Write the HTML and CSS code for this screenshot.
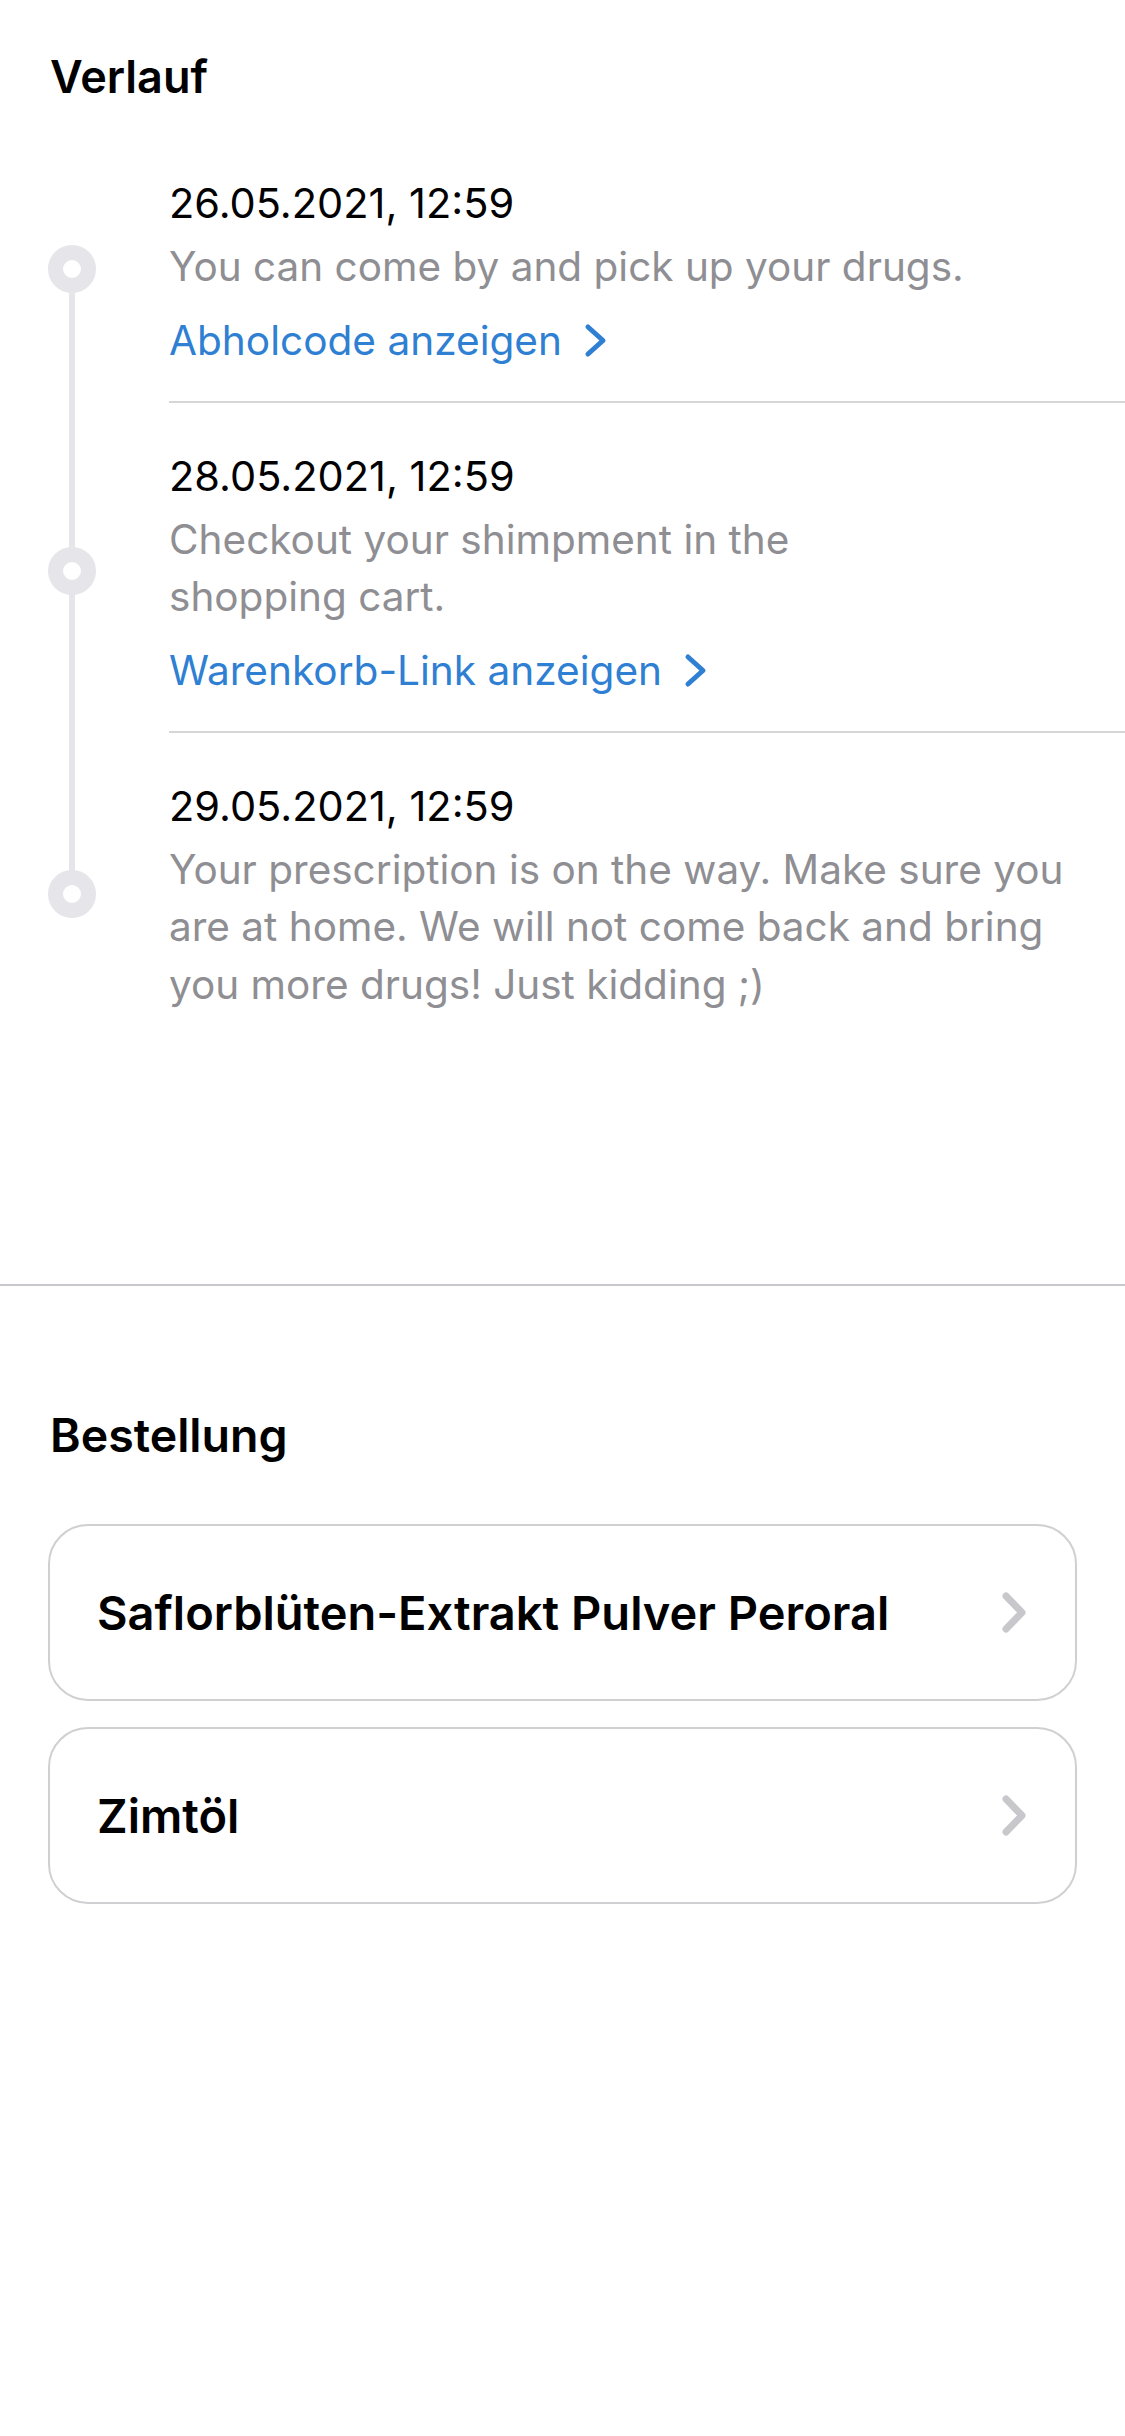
FILE: index.html
```html
<!DOCTYPE html>
<html lang="de">
<head>
<meta charset="utf-8">
<title>Verlauf</title>
<link rel="stylesheet" href="styles.css">
</head>
<body>
<section class="history">
  <h2 class="section-title title-history">Verlauf</h2>
  <ol class="timeline">
    <li class="event event-first">
      <div class="marker"><span class="dot"></span></div>
      <div class="event-body">
        <div class="event-date">26.05.2021, 12:59</div>
        <p class="event-desc">You can come by and pick up your drugs.</p>
        <a class="event-link" href="#">Abholcode anzeigen
          <svg class="link-chevron" viewBox="0 0 23 35" width="23" height="35"><path d="M4 4 L19 17.5 L4 31" fill="none" stroke="currentColor" stroke-width="5" stroke-linecap="round" stroke-linejoin="round"/></svg>
        </a>
      </div>
    </li>
    <li class="event">
      <div class="marker"><span class="dot"></span></div>
      <div class="event-body">
        <div class="event-date">28.05.2021, 12:59</div>
        <p class="event-desc">Checkout your shimpment in the<br>shopping cart.</p>
        <a class="event-link" href="#">Warenkorb-Link anzeigen
          <svg class="link-chevron" viewBox="0 0 23 35" width="23" height="35"><path d="M4 4 L19 17.5 L4 31" fill="none" stroke="currentColor" stroke-width="5" stroke-linecap="round" stroke-linejoin="round"/></svg>
        </a>
      </div>
    </li>
    <li class="event event-last">
      <div class="marker"><span class="dot"></span></div>
      <div class="event-body">
        <div class="event-date">29.05.2021, 12:59</div>
        <p class="event-desc">Your prescription is on the way. Make sure you<br>are at home. We will not come back and bring<br>you more drugs! Just kidding ;)</p>
      </div>
    </li>
  </ol>
</section>
<section class="order">
  <h2 class="section-title title-order">Bestellung</h2>
  <ul class="cards">
    <li class="card">
      <span class="card-name">Saflorblüten-Extrakt Pulver Peroral</span>
      <svg class="card-chevron" viewBox="0 0 24 41" width="24" height="41"><path d="M4 4 L20 20.5 L4 37" fill="none" stroke="currentColor" stroke-width="7" stroke-linecap="round" stroke-linejoin="round"/></svg>
    </li>
    <li class="card">
      <span class="card-name">Zimtöl</span>
      <svg class="card-chevron" viewBox="0 0 24 41" width="24" height="41"><path d="M4 4 L20 20.5 L4 37" fill="none" stroke="currentColor" stroke-width="7" stroke-linecap="round" stroke-linejoin="round"/></svg>
    </li>
  </ul>
</section>
</body>
</html>
```
FILE: styles.css
```css
* { box-sizing: border-box; }

html, body {
  margin: 0;
  padding: 0;
  background: #ffffff;
}

body {
  width: 1125px;
  min-height: 2436px;
  font-family: Inter, "Noto Sans", "Liberation Sans", sans-serif;
  color: #000000;
}

.section-title {
  margin: 0;
  font-weight: 600;
  color: #000;
}

.history {
  padding-top: 50px;
  padding-bottom: 234px;
  border-bottom: 2px solid #c8c8cc;
}

.title-history {
  padding-left: 50px;
  font-size: 45px;
  line-height: 54px;
}

.timeline {
  list-style: none;
  margin: 26px 0 0;
  padding: 0;
}

.event {
  display: flex;
  align-items: stretch;
}

.marker {
  position: relative;
  flex: none;
  width: 169px;
  display: flex;
  align-items: center;
  padding-top: 6px;
}

.marker::before {
  content: "";
  position: absolute;
  left: 69px;
  width: 6px;
  top: 0;
  bottom: 0;
  background: #e5e5ea;
}

.event-first .marker::before { top: 50%; }
.event-last .marker::before { bottom: 50%; }

.dot {
  position: relative;
  z-index: 1;
  display: block;
  width: 48px;
  height: 48px;
  margin-left: 48px;
  border-radius: 50%;
  border: 15px solid #e5e5ea;
  background: #ffffff;
}

.event-body {
  flex: 1;
  padding: 48px 30px 35px 0;
  border-bottom: 2px solid #d6d6d9;
}

.event-last .event-body {
  border-bottom: none;
  padding-bottom: 37px;
}

.event-date {
  font-size: 41.5px;
  line-height: 50px;
  color: #000;
}

.event-desc {
  margin: 10px 0 0;
  font-size: 40.5px;
  line-height: 57.5px;
  color: #8e8e93;
}

.event-link {
  margin-top: 20px;
  display: flex;
  align-items: center;
  gap: 22px;
  font-size: 40.6px;
  line-height: 50px;
  color: #2f7fd3;
  text-decoration: none;
}

.link-chevron {
  display: block;
  flex: none;
}

.order {
  padding-top: 122px;
}

.title-order {
  padding-left: 50px;
  font-size: 46.5px;
  line-height: 55px;
}

.cards {
  list-style: none;
  margin: 61px 48px 0;
  padding: 0;
  display: flex;
  flex-direction: column;
  gap: 26px;
}

.card {
  height: 177px;
  border: 2px solid #d0d0d3;
  border-radius: 40px;
  display: flex;
  align-items: center;
  justify-content: space-between;
  padding: 0 49px 0 47px;
}

.card-name {
  font-size: 47px;
  font-weight: 600;
  color: #000;
}

.card-chevron {
  display: block;
  flex: none;
  color: #c7c7cc;
}
```
